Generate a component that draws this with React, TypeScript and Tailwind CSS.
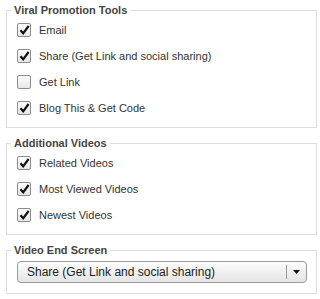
const viral = [
  { label: "Email", checked: true },
  { label: "Share (Get Link and social sharing)", checked: true },
  { label: "Get Link", checked: false },
  { label: "Blog This & Get Code", checked: true },
]

const videos = [
  { label: "Related Videos", checked: true },
  { label: "Most Viewed Videos", checked: true },
  { label: "Newest Videos", checked: true },
]

const Box = ({ checked }: { checked: boolean }) => (
  <span className="flex h-[14px] w-[14px] shrink-0 items-center justify-center rounded-[2px] border border-[#8c8c8c] bg-gradient-to-b from-white to-[#e6e6e6] shadow-[inset_0_1px_0_#fff]">
    {checked && (
      <svg width="11" height="10" viewBox="0 0 11 10">
        <path d="M1.5 5.2 L4.2 8.3 L9.6 1" fill="none" stroke="#111" strokeWidth="2.2" strokeLinejoin="miter" />
      </svg>
    )}
  </span>
)

const Row = ({ label, checked }: { label: string; checked: boolean }) => (
  <label className="flex h-[26px] items-center gap-[8px] pl-[10px]">
    <Box checked={checked} />
    <span className="text-[11px] text-[#333]">{label}</span>
  </label>
)

const Group = ({ title, children, className = "" }: { title: string; children: React.ReactNode; className?: string }) => (
  <fieldset className={"mx-[6px] w-[311px] border border-[#dedede] " + className}>
    <legend className="ml-[4px] px-[3px] text-[11px] font-bold leading-[13px] text-[#444]">{title}</legend>
    {children}
  </fieldset>
)

export default function App() {
  return (
    <div className="h-[299px] w-[320px] bg-white pt-[4px] font-['Liberation_Sans',Arial,sans-serif]">
      <Group title="Viral Promotion Tools" className="pb-[6px]">
        {viral.map((v) => (
          <Row key={v.label} {...v} />
        ))}
      </Group>

      <Group title="Additional Videos" className="mt-[9px] pb-[6px]">
        {videos.map((v) => (
          <Row key={v.label} {...v} />
        ))}
      </Group>

      <Group title="Video End Screen" className="mt-[9px] pb-[10px]">
        <div className="ml-[10px] mt-[4px] flex h-[22px] w-[290px] items-center rounded-[4px] border border-[#9a9a9a] bg-gradient-to-b from-[#fdfdfd] to-[#e4e4e4]">
          <span className="flex-1 pl-[9px] text-[12px] text-[#222]">Share (Get Link and social sharing)</span>
          <span className="h-[14px] w-px bg-[#9a9a9a]" />
          <span className="flex w-[19px] justify-center">
            <svg width="7" height="4" viewBox="0 0 7 4">
              <path d="M0 0 H7 L3.5 4 Z" fill="#111" />
            </svg>
          </span>
        </div>
      </Group>
    </div>
  )
}
